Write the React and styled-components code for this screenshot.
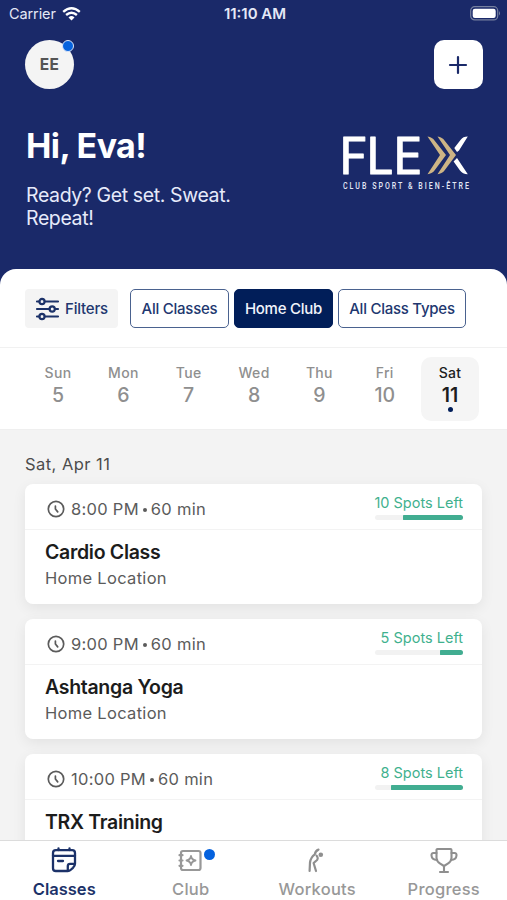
import React from "react";
import styled, { createGlobalStyle } from "styled-components";

const GlobalStyle = createGlobalStyle`
  * {
    box-sizing: border-box;
  }
  body {
    margin: 0;
    font-family: Inter, "Liberation Sans", sans-serif;
  }
  button {
    font-family: inherit;
    border: none;
    padding: 0;
  }
  svg {
    display: block;
    flex: none;
    overflow: visible;
  }
`;

const Screen = styled.div`
  display: flex;
  flex-direction: column;
  width: 507px;
  height: 900px;
  overflow: hidden;
  background: #1a2969;
`;

const StatusBar = styled.div`
  display: grid;
  grid-template-columns: 1fr auto 1fr;
  align-items: center;
  height: 27px;
  padding: 0 6px 0 9px;
  color: #e4e8f6;
`;

const Carrier = styled.div`
  display: flex;
  align-items: center;
  gap: 6px;
  font-size: 14.5px;
  letter-spacing: -0.1px;
`;

const Clock = styled.div`
  font-size: 15px;
  font-weight: 600;
`;

const BatteryWrap = styled.div`
  justify-self: end;
`;

const Header = styled.header`
  flex: none;
  height: 242px;
  padding: 13px 24px 0 25px;
`;

const HeaderRow = styled.div`
  display: flex;
  justify-content: space-between;
`;

const Avatar = styled.div`
  position: relative;
  display: flex;
  align-items: center;
  justify-content: center;
  width: 49px;
  height: 49px;
  border-radius: 50%;
  background: #f4f4f4;
  color: #555;
  font-size: 15.5px;
  font-weight: 700;
  letter-spacing: 0.3px;
`;

const AvatarBadge = styled.span`
  position: absolute;
  top: 0;
  right: 0;
  width: 12px;
  height: 12px;
  border: 1px solid #d8e4fa;
  border-radius: 50%;
  background: #0562de;
`;

const AddButton = styled.button`
  display: flex;
  align-items: center;
  justify-content: center;
  width: 49px;
  height: 49px;
  padding: 0 1px 0 0;
  border-radius: 10px;
  background: #fff;
`;

const Greeting = styled.div`
  padding: 36px 0 0 1px;
`;

const Hello = styled.h1`
  margin: 0 0 17px;
  color: #fff;
  font-size: 34px;
  line-height: 42px;
  font-weight: 700;
  letter-spacing: -0.6px;
`;

const Tagline = styled.p`
  width: 220px;
  margin: 0;
  color: #e6eafa;
  font-size: 19.5px;
  line-height: 23.3px;
  letter-spacing: -0.38px;
  white-space: nowrap;
`;

const LogoWrap = styled.div`
  padding: 43px 10px 0 0;
`;

const Panel = styled.main`
  flex: 1;
  display: flex;
  flex-direction: column;
  min-height: 0;
  overflow: hidden;
  border-radius: 16px 16px 0 0;
  background: #fff;
`;

const FilterBar = styled.div`
  display: flex;
  flex: none;
  height: 79px;
  padding: 20px 0 0 25px;
  border-bottom: 1px solid #f1f1f1;
`;

const FilterButton = styled.button`
  display: flex;
  align-items: center;
  gap: 6px;
  width: 93px;
  height: 39px;
  margin-right: 12px;
  padding-left: 11px;
  border-radius: 4px;
  background: #f4f4f4;
  color: #21376f;
  font-size: 15px;
  font-weight: 500;
  letter-spacing: -0.2px;
`;

const Chip = styled.button`
  width: ${(p) => p.$width}px;
  height: 39px;
  margin-right: 5px;
  border: 1.5px solid ${(p) => (p.$active ? "#011e59" : "#4a628f")};
  border-radius: 5px;
  background: ${(p) => (p.$active ? "#011e59" : "#fff")};
  color: ${(p) => (p.$active ? "#f1f4fb" : "#21376f")};
  font-size: 15px;
  font-weight: 500;
  letter-spacing: -0.25px;
  white-space: nowrap;
`;

const Week = styled.div`
  display: grid;
  grid-template-columns: repeat(7, 58px);
  column-gap: 7.35px;
  flex: none;
  height: 82px;
  padding: 9px 0 0 29px;
  border-bottom: 1px solid #efefef;
`;

const Day = styled.div`
  display: flex;
  flex-direction: column;
  align-items: center;
  height: 64px;
  padding-top: 6px;
  border-radius: 10px;
  background: ${(p) => (p.$active ? "#f5f5f5" : "transparent")};
  color: ${(p) => (p.$active ? "#1d1d1d" : "#8f8f8f")};
`;

const DayName = styled.div`
  font-size: 14px;
  line-height: 19px;
  font-weight: 500;
  letter-spacing: 0.3px;
`;

const DayNumber = styled.div`
  font-size: 19.5px;
  line-height: 26px;
  font-weight: ${(p) => (p.$active ? 600 : 500)};
`;

const DayDot = styled.span`
  width: 5px;
  height: 5px;
  margin-top: -1px;
  border-radius: 50%;
  background: #011e59;
`;

const Schedule = styled.section`
  flex: 1;
  min-height: 0;
  overflow: hidden;
  padding: 24px 25px 0;
  background: #f3f3f3;
`;

const DateHeading = styled.h2`
  margin: 0 0 10px;
  color: #4c4c4c;
  font-size: 16.5px;
  line-height: 20px;
  font-weight: 400;
  letter-spacing: 0.45px;
`;

const Card = styled.article`
  height: 120px;
  margin-bottom: 15.2px;
  border-radius: 8px;
  background: #fff;
  box-shadow: 0 4px 14px rgba(0, 0, 0, 0.07);
`;

const CardTop = styled.div`
  display: flex;
  justify-content: space-between;
  height: 46px;
  padding: 0 19px 0 22px;
  border-bottom: 1px solid #f3f3f3;
`;

const Time = styled.div`
  display: flex;
  align-items: center;
  gap: 6px;
  padding-top: 5px;
  color: #5b5b5b;
  font-size: 16.5px;
  letter-spacing: 0.28px;
`;

const TimeDot = styled.span`
  display: inline-block;
  width: 4px;
  height: 4px;
  margin: 0 4px 3px;
  border-radius: 50%;
  background: #5b5b5b;
`;

const Spots = styled.div`
  display: flex;
  flex-direction: column;
  align-items: flex-end;
  padding-top: 10px;
  color: #3fb18e;
  font-size: 14.5px;
  line-height: 18px;
`;

const Track = styled.div`
  display: flex;
  justify-content: flex-end;
  width: 88px;
  height: 5px;
  margin-top: 3px;
  border-radius: 3px;
  background: #f2f2f2;
`;

const Bar = styled.div`
  height: 5px;
  border-radius: 1px 3px 3px 1px;
  background: #41ad91;
`;

const CardBody = styled.div`
  padding: 9px 20px 0;
`;

const ClassName = styled.h3`
  margin: 0;
  color: #1c1c1c;
  font-size: 19.5px;
  line-height: 26px;
  font-weight: 600;
  letter-spacing: -0.3px;
`;

const Location = styled.p`
  margin: 0;
  color: #5b5b5b;
  font-size: 16.5px;
  line-height: 26px;
  letter-spacing: 0.3px;
`;

const TabBar = styled.nav`
  display: grid;
  grid-template-columns: repeat(4, 1fr);
  flex: none;
  height: 60px;
  padding-left: 1px;
  border-top: 1px solid #dcdcdc;
  background: #fff;
`;

const Tab = styled.div`
  display: flex;
  flex-direction: column;
  align-items: center;
  padding-top: 5px;
  color: ${(p) => (p.$active ? "#1c3269" : "#989898")};
  font-size: 16.5px;
  line-height: 20px;
  font-weight: ${(p) => (p.$active ? 600 : 500)};
  letter-spacing: ${(p) => (p.$active ? 0 : 0.25)}px;
`;

const TabIcon = styled.div`
  position: relative;
  height: 28px;
  margin-bottom: 5px;
`;

const TabBadge = styled.span`
  position: absolute;
  top: 3px;
  right: -11px;
  width: 11px;
  height: 11px;
  border-radius: 50%;
  background: #0562de;
`;

const WifiIcon = () => (
  <svg width="19" height="14" viewBox="0 0 19 14" fill="none" stroke="#fff" strokeWidth="2.4">
    <path d="M1.2 4.9Q9.5 -2.2 17.8 4.9" />
    <path d="M4.1 8Q9.5 3.3 14.9 8" />
    <path d="M6.5 10.4Q9.5 7.7 12.5 10.4L9.5 13.4Z" fill="#fff" stroke="none" />
  </svg>
);

const BatteryIcon = () => (
  <svg width="31" height="15" viewBox="0 0 31 15">
    <rect x="0.7" y="0.7" width="27" height="13.2" rx="4" fill="none" stroke="#76809f" strokeWidth="1.2" />
    <rect x="2.7" y="2.7" width="23" height="9.2" rx="2.2" fill="#fff" />
    <path d="M29 5Q31 7.3 29 9.6Z" fill="#76809f" />
  </svg>
);

const PlusIcon = () => (
  <svg width="18" height="18" viewBox="0 0 18 18" stroke="#1a2969" strokeWidth="2.2" strokeLinecap="round">
    <path d="M9 1V17M1 9H17" />
  </svg>
);

const SlidersIcon = () => (
  <svg width="23" height="24" viewBox="0 0 23 24" fill="none" stroke="#1c3269" strokeWidth="2.2" strokeLinecap="round">
    <path d="M1 4.5H3.3M8.8 4.5H22M1 12H13.4M19 12H22M1 19.5H3.3M8.8 19.5H22" />
    <circle cx="6" cy="4.5" r="2.6" />
    <circle cx="16.2" cy="12" r="2.6" />
    <circle cx="6" cy="19.5" r="2.6" />
  </svg>
);

const ClockIcon = () => (
  <svg width="18" height="18" viewBox="0 0 18 18" fill="none" stroke="#5b5b5b" strokeWidth="1.7" strokeLinecap="round">
    <circle cx="9" cy="9" r="7.7" />
    <path d="M8.4 6V9L10.7 11.9" />
  </svg>
);

const FlexLogo = () => (
  <svg width="130" height="58" viewBox="0 0 130 58">
    <text
      transform="scale(0.96 1)"
      x="-3.6 24.6 52.6"
      y="41.6"
      fill="#fff"
      stroke="#fff"
      strokeWidth="1"
      strokeLinejoin="round"
      fontFamily="Inter, sans-serif"
      fontSize="50"
      fontWeight="400"
    >
      FLE
    </text>
    <path d="M124.8 4.6Q120 4.6 117.5 8L111.3 16L114 20L116 18.4Z" fill="#fff" />
    <path d="M114 26L124.8 42.3Q119.5 42.3 117 38.6L110.6 29.5Z" fill="#fff" />
    <path d="M84.5 4.6Q89.5 5.5 91.5 8.5L103 23L91.5 38.5Q89 41.8 84.5 42.3L97 23Z" fill="#cdb485" />
    <path d="M94.5 4.6Q99.5 5.5 101.5 8.5L113 23L101.5 38.5Q99 41.8 94.5 42.3L107 23Z" fill="#cdb485" />
    <text
      transform="translate(0 57) scale(0.72 1)"
      fill="#e4e8f6"
      fontFamily="Roboto, sans-serif"
      fontSize="9.8"
      fontWeight="500"
      textLength="175"
    >
      CLUB SPORT &amp; BIEN-ÊTRE
    </text>
  </svg>
);

const ClassesIcon = () => (
  <svg width="26" height="28" viewBox="0 0 26 28" fill="none" stroke="#1c3269" strokeWidth="2.3" strokeLinecap="round" strokeLinejoin="round">
    <path d="M24 17.5V7Q24 4.2 21.2 4.2H4.8Q2 4.2 2 7V22.2Q2 25 4.8 25H16.8V20Q16.8 17.8 19 17.8H24Q24 19.8 22 21.8L19.5 24Q18.5 25 16.8 25" />
    <path d="M2 9.8H24M7 15H12M7.5 2.4V4M18.5 2.4V4" />
  </svg>
);

const ClubIcon = () => (
  <svg width="26" height="28" viewBox="0 0 26 28" fill="none" stroke="#989898" strokeWidth="2.2" strokeLinecap="round" strokeLinejoin="round">
    <rect x="3" y="5" width="19.5" height="19" rx="2" />
    <path d="M1.5 9.2H4.5M1.5 14.5H4.5M1.5 19.8H4.5" />
    <path d="M13 10Q13.6 13.9 17.5 14.5Q13.6 15.1 13 19Q12.4 15.1 8.5 14.5Q12.4 13.9 13 10Z" strokeWidth="1.8" />
  </svg>
);

const WorkoutsIcon = () => (
  <svg width="26" height="28" viewBox="0 0 26 28" fill="none" stroke="#8f8f8f" strokeWidth="2.2" strokeLinecap="round" strokeLinejoin="round">
    <path d="M14.5 3.6Q11.5 4.7 10.8 8.3Q6.6 11.5 6 16.5L5.6 25" />
    <path d="M12.6 9.6Q15.2 13 11.8 15.2L9.6 17L12 25" />
    <circle cx="16.8" cy="8.7" r="2.3" fill="#8f8f8f" stroke="none" />
  </svg>
);

const ProgressIcon = () => (
  <svg width="28" height="28" viewBox="0 0 28 28" fill="none" stroke="#8f8f8f" strokeWidth="2.1" strokeLinecap="round" strokeLinejoin="round">
    <path d="M7.5 3H20.5Q21.5 3 21.5 4V12Q21.2 15.6 17.8 17.6L14 20L10.2 17.6Q6.8 15.6 6.5 12V4Q6.5 3 7.5 3Z" />
    <path d="M6.5 7H3.5Q1.3 7 1.5 9.5Q1.8 13.8 7 14M21.5 7H24.5Q26.7 7 26.5 9.5Q26.2 13.8 21 14" />
    <path d="M14 20V26M10 26H18" />
  </svg>
);

const days = [
  { name: "Sun", number: 5 },
  { name: "Mon", number: 6 },
  { name: "Tue", number: 7 },
  { name: "Wed", number: 8 },
  { name: "Thu", number: 9 },
  { name: "Fri", number: 10 },
  { name: "Sat", number: 11, active: true },
];

const classes = [
  { time: "8:00 PM", name: "Cardio Class", spots: 10, left: 68 },
  { time: "9:00 PM", name: "Ashtanga Yoga", spots: 5, left: 26 },
  { time: "10:00 PM", name: "TRX Training", spots: 8, left: 82 },
];

const tabs = [
  { label: "Classes", Icon: ClassesIcon, active: true },
  { label: "Club", Icon: ClubIcon, badge: true },
  { label: "Workouts", Icon: WorkoutsIcon },
  { label: "Progress", Icon: ProgressIcon },
];

const App = () => {
  return (
    <>
      <GlobalStyle />
      <Screen>
        <StatusBar>
          <Carrier>
            Carrier
            <WifiIcon />
          </Carrier>
          <Clock>11:10 AM</Clock>
          <BatteryWrap>
            <BatteryIcon />
          </BatteryWrap>
        </StatusBar>

        <Header>
          <HeaderRow>
            <Avatar>
              EE
              <AvatarBadge />
            </Avatar>
            <AddButton aria-label="Add">
              <PlusIcon />
            </AddButton>
          </HeaderRow>
          <HeaderRow>
            <Greeting>
              <Hello>Hi, Eva!</Hello>
              <Tagline>
                Ready? Get set. Sweat.
                <br />
                Repeat!
              </Tagline>
            </Greeting>
            <LogoWrap>
              <FlexLogo />
            </LogoWrap>
          </HeaderRow>
        </Header>

        <Panel>
          <FilterBar>
            <FilterButton>
              <SlidersIcon />
              Filters
            </FilterButton>
            <Chip $width={99}>All Classes</Chip>
            <Chip $width={99} $active>
              Home Club
            </Chip>
            <Chip $width={128}>All Class Types</Chip>
          </FilterBar>

          <Week>
            {days.map((day) => (
              <Day key={day.name} $active={day.active}>
                <DayName>{day.name}</DayName>
                <DayNumber $active={day.active}>{day.number}</DayNumber>
                {day.active && <DayDot />}
              </Day>
            ))}
          </Week>

          <Schedule>
            <DateHeading>Sat, Apr 11</DateHeading>
            {classes.map((item) => (
              <Card key={item.time}>
                <CardTop>
                  <Time>
                    <ClockIcon />
                    <span>
                      {item.time}
                      <TimeDot />
                      60 min
                    </span>
                  </Time>
                  <Spots>
                    {item.spots} Spots Left
                    <Track>
                      <Bar style={{ width: `${item.left}%` }} />
                    </Track>
                  </Spots>
                </CardTop>
                <CardBody>
                  <ClassName>{item.name}</ClassName>
                  <Location>Home Location</Location>
                </CardBody>
              </Card>
            ))}
          </Schedule>
        </Panel>

        <TabBar>
          {tabs.map(({ label, Icon, active, badge }) => (
            <Tab key={label} $active={active}>
              <TabIcon>
                <Icon />
                {badge && <TabBadge />}
              </TabIcon>
              {label}
            </Tab>
          ))}
        </TabBar>
      </Screen>
    </>
  );
};

export default App;
